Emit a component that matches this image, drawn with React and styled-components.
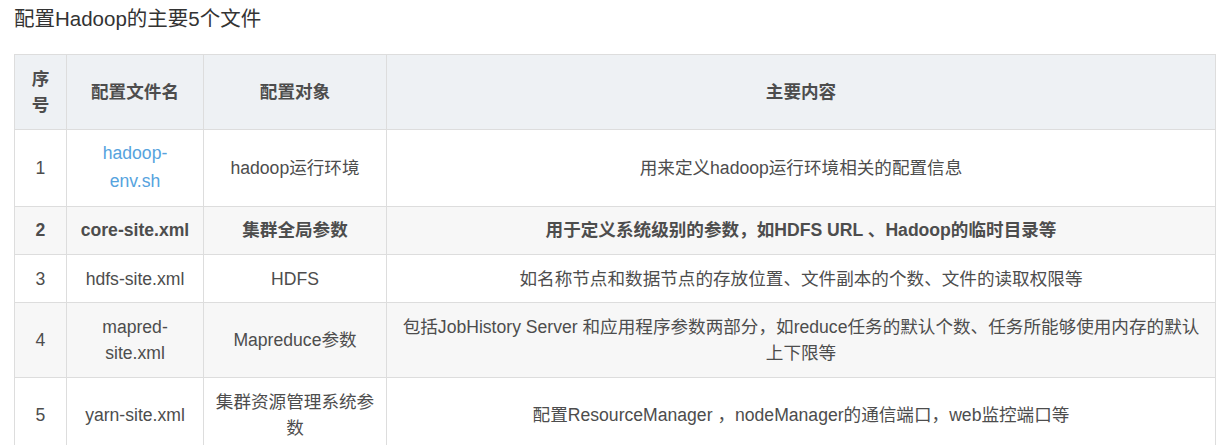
import React from 'react';
import styled, { createGlobalStyle } from 'styled-components';

const GlobalStyle = createGlobalStyle`
  html, body {
    margin: 0;
    padding: 0;
    background: #fff;
  }
  body {
    font-family: "Liberation Sans", "Noto Sans CJK SC", sans-serif;
    color: #4d4d4d;
  }
`;

const Page = styled.main`
  padding: 6px 0 0 14px;
`;

const Title = styled.h3`
  margin: 0 0 22px;
  font-size: 20.5px;
  line-height: 26px;
  font-weight: normal;
  color: #333;
`;

const Table = styled.table`
  width: 1202px;
  border-collapse: collapse;
  table-layout: fixed;
  font-size: 17.6px;
  line-height: 26.4px;
`;

const HeadCell = styled.th`
  background: #eef1f4;
  border: 1px solid #ddd;
  padding: 10.5px 11px;
  font-weight: bold;
  color: #4d4d4d;
  text-align: center;
  vertical-align: middle;
`;

const Row = styled.tr`
  background: ${props => (props.$striped ? '#f7f7f7' : '#fff')};
  font-weight: ${props => (props.$bold ? 'bold' : 'normal')};
`;

const Cell = styled.td`
  border: 1px solid #ddd;
  padding: 10.5px 11px;
  text-align: center;
  vertical-align: middle;
  word-break: normal;
`;

const FileLink = styled.a`
  color: #56a3de;
  text-decoration: none;
  line-height: 27.4px;
`;

const rows = [
  {
    no: '1',
    file: <FileLink href="#">hadoop-env.sh</FileLink>,
    target: 'hadoop运行环境',
    content: '用来定义hadoop运行环境相关的配置信息',
  },
  {
    no: '2',
    file: 'core-site.xml',
    target: '集群全局参数',
    content: '用于定义系统级别的参数，如HDFS URL 、Hadoop的临时目录等',
    bold: true,
  },
  {
    no: '3',
    file: 'hdfs-site.xml',
    target: 'HDFS',
    content: '如名称节点和数据节点的存放位置、文件副本的个数、文件的读取权限等',
  },
  {
    no: '4',
    file: 'mapred-site.xml',
    target: 'Mapreduce参数',
    content: '包括JobHistory Server 和应用程序参数两部分，如reduce任务的默认个数、任务所能够使用内存的默认上下限等',
  },
  {
    no: '5',
    file: 'yarn-site.xml',
    target: '集群资源管理系统参数',
    content: '配置ResourceManager ，nodeManager的通信端口，web监控端口等',
  },
];

const App = () => (
  <Page>
    <GlobalStyle />
    <Title>配置Hadoop的主要5个文件</Title>
    <Table>
      <colgroup>
        <col style={{ width: 52 }} />
        <col style={{ width: 137 }} />
        <col style={{ width: 183 }} />
        <col />
      </colgroup>
      <thead>
        <tr>
          <HeadCell>序号</HeadCell>
          <HeadCell>配置文件名</HeadCell>
          <HeadCell>配置对象</HeadCell>
          <HeadCell>主要内容</HeadCell>
        </tr>
      </thead>
      <tbody>
        {rows.map((row, index) => (
          <Row key={row.no} $striped={index % 2 === 1} $bold={row.bold}>
            <Cell>{row.no}</Cell>
            <Cell>{row.file}</Cell>
            <Cell>{row.target}</Cell>
            <Cell>{row.content}</Cell>
          </Row>
        ))}
      </tbody>
    </Table>
  </Page>
);

export default App;
